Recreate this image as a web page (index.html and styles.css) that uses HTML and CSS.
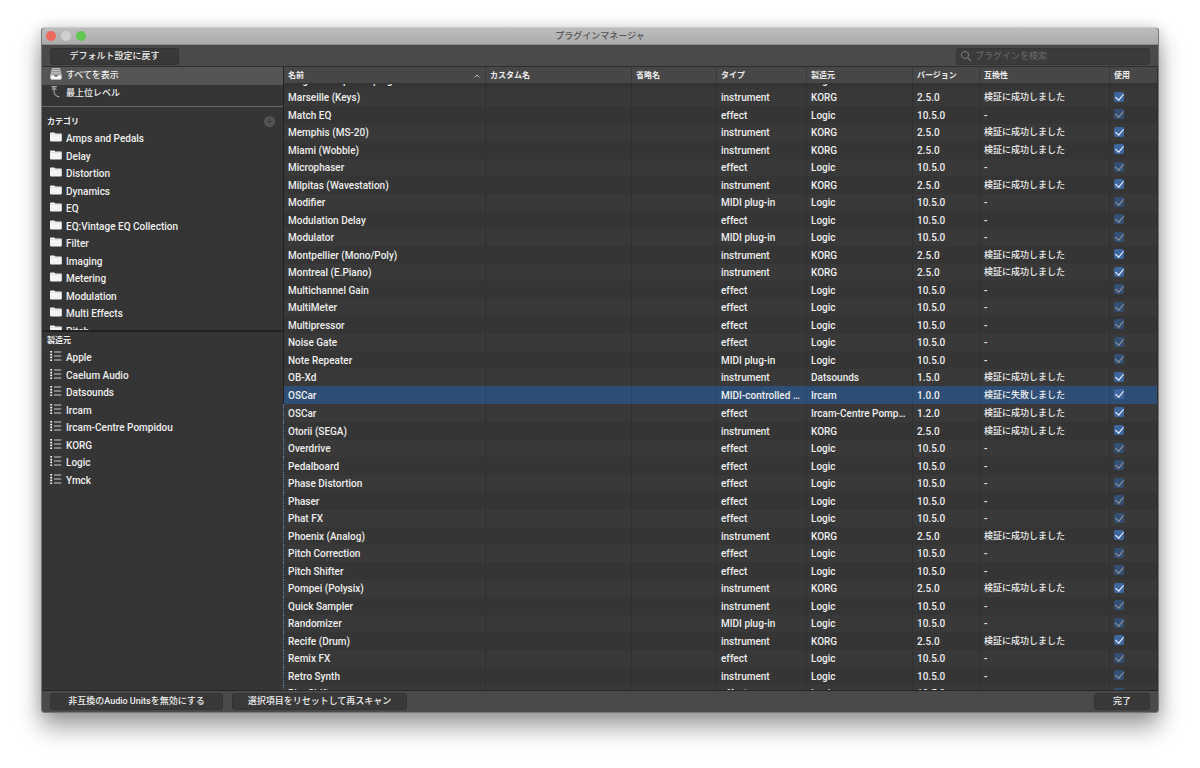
FILE: index.html
```html
<!DOCTYPE html>
<html lang="ja">
<head>
    <meta charset="UTF-8">
    <title>プラグインマネージャ</title>
    <link rel="stylesheet" href="styles.css">
</head>
<body>
<!--アイコン定義-->
<svg class="defs" aria-hidden="true">
    <symbol id="folder" viewBox="0 0 12 10">
        <path d="M0 1.2Q0 .4.8.4H4.2L5.4 1.4H11Q11.8 1.4 11.8 2.2V8.6Q11.8 9.4 11 9.4H.8Q0 9.4 0 8.6Z" fill="#f4f4f4"/>
        <path d="M0 2.6H11.8" stroke="#c5c5c5" stroke-width=".4"/>
    </symbol>
    <symbol id="list" viewBox="0 0 12 10">
        <path d="M.3 0h1.8v1.6H.3zM.3 2.8h1.8v1.6H.3zM.3 5.6h1.8v1.6H.3zM.3 8.4h1.8V10H.3z" fill="#fff"/>
        <path d="M4 1h7.2M4 5h7.2M4 9h7.2" stroke="#ccc"/>
    </symbol>
</svg>

<div class="window">
    <header class="titlebar">
        <div class="lights">
            <button class="light red" aria-label="閉じる"></button>
            <button class="light gray" aria-label="しまう"></button>
            <button class="light green" aria-label="拡大"></button>
        </div>
        <h1>プラグインマネージャ</h1>
    </header>

    <div class="toolbar">
        <button class="btn btn-default">デフォルト設定に戻す</button>
        <label class="search">
            <svg width="12" height="12" viewBox="0 0 12 12" aria-hidden="true">
                <circle cx="5" cy="5" r="3.6" fill="none" stroke="#7c7c7c"/>
                <path d="M7.6 7.6L11 11" stroke="#7c7c7c" stroke-width="1.2"/>
            </svg>
            <input type="search" placeholder="プラグインを検索" aria-label="プラグインを検索">
        </label>
    </div>

    <div class="main">
        <nav class="sidebar">
            <ul class="list top">
                <li class="active"><svg class="icon" viewBox="0 0 12 12"><path d="M2.4.6H9.6L11.2 7V10.4Q11.2 11.2 10.4 11.2H1.6Q.8 11.2.8 10.4V7Z" fill="#777" stroke="#ddd" stroke-width=".8"/><path d="M2.6 2.4H9.4M2.2 4.2H9.8M1.8 6H10.2" stroke="#eee" stroke-width=".8"/><path d="M.8 7.2H4Q4.4 9 6 9T8 7.2H11.2V11.2H.8Z" fill="#f4f4f4"/></svg><span class="jp">すべてを表示</span></li>
                <li><svg class="icon" viewBox="0 0 12 12"><path d="M1.2.7H7M4.1 1.2V5.6Q4.3 10.2 9.4 10.8M1.8 4L4.1 1.5L6.4 4" fill="none" stroke="#ccc" stroke-width=".9"/></svg><span class="jp">最上位レベル</span></li>
            </ul>
            <section class="group categories">
                <h2>カテゴリ
                    <button class="add" aria-label="カテゴリを追加"><svg width="11" height="11" viewBox="0 0 11 11"><circle cx="5.5" cy="5.5" r="5.5" fill="#545454"/><path d="M5.5 2.5V8.5M2.5 5.5H8.5" stroke="#3a3a3a"/></svg></button>
                </h2>
                <ul class="list" id="categories"></ul>
            </section>
            <section class="group makers">
                <h2>製造元</h2>
                <ul class="list" id="makers"></ul>
            </section>
        </nav>

        <div class="plugins" id="plugins">
            <table>
                <colgroup>
                    <col><col class="c-custom"><col class="c-short"><col class="c-type"><col class="c-maker"><col class="c-version"><col class="c-compat"><col class="c-use">
                </colgroup>
                <thead>
                <tr>
                    <th><div class="sort">名前<svg width="6" height="4" viewBox="0 0 6 4"><path d="M.6 3.4L3 1L5.4 3.4" fill="none" stroke="#ccc" stroke-width=".9"/></svg></div></th>
                    <th>カスタム名</th>
                    <th>省略名</th>
                    <th>タイプ</th>
                    <th>製造元</th>
                    <th>バージョン</th>
                    <th>互換性</th>
                    <th>使用</th>
                </tr>
                </thead>
                <tbody id="rows"></tbody>
            </table>
        </div>
    </div>

    <footer class="bottombar">
        <button class="btn btn-disable">非互換のAudio Unitsを無効にする</button>
        <button class="btn btn-rescan">選択項目をリセットして再スキャン</button>
        <button class="btn btn-done">完了</button>
    </footer>
</div>

<script src="script.js"></script>
</body>
</html>
```
FILE: styles.css
```css
* {
    box-sizing: border-box;
}

body {
    margin: 0;
    height: 100vh;
    padding: 27px 41px 55px;
    background: #fff;
    color: #eee;
    font-family: Roboto, "Noto Sans CJK JP", sans-serif;
    font-size: 10px;
    font-weight: 500;
    line-height: 17px;
}

h1, h2, ul {
    margin: 0;
    padding: 0;
    list-style: none;
}

button, input {
    font-family: inherit;
    color: inherit;
}

.defs {
    display: none;
}

.window {
    display: flex;
    flex-direction: column;
    height: 100%;
    background: #4a4a4a;
    border-radius: 4px;
    overflow: hidden;
    border: 1px solid #777;
    border-top-color: #ccc;
    box-shadow: 0 14px 24px rgba(0, 0, 0, .38), 0 0 14px rgba(0, 0, 0, .14);
}

/* タイトルバー */
.titlebar {
    display: grid;
    grid-template-columns: 1fr auto 1fr;
    align-items: center;
    flex: none;
    height: 17px;
    padding: 0 4px;
    background: linear-gradient(#bdbdbd, #acacac);
    border-bottom: 1px solid #8a8a8a;
}

.titlebar h1 {
    color: #555;
    font-size: 9px;
    font-weight: 500;
    line-height: 16px;
}

.lights {
    display: flex;
    gap: 5px;
}

.light {
    width: 10px;
    height: 10px;
    padding: 0;
    border: 0;
    border-radius: 50%;
}

.red {
    background: #ee6a5f;
}

.gray {
    background: #d0d0d0;
}

.green {
    background: #62c655;
}

/* ツールバー */
.toolbar, .bottombar {
    display: flex;
    align-items: center;
    flex: none;
    gap: 9px;
    padding: 0 8px;
    background: #4a4a4a;
}

.toolbar {
    justify-content: space-between;
    height: 21px;
    padding-top: 1px;
}

.bottombar {
    height: 22px;
    padding-bottom: 1px;
    border-top: 1px solid #262626;
}

.btn {
    height: 17px;
    padding: 0;
    background: #393939;
    border: 1px solid #333;
    border-radius: 3px;
    font-size: 9px;
    font-weight: 500;
    line-height: 15px;
}

.btn-default {
    width: 129px;
}

.btn-disable {
    width: 173px;
}

.btn-rescan {
    width: 175px;
}

.btn-done {
    width: 56px;
    margin-left: auto;
}

.search {
    display: flex;
    align-items: center;
    gap: 3px;
    width: 194px;
    height: 17px;
    padding: 0 3px;
    background: #3b3b3b;
    border: 1px solid #363636;
    border-radius: 3px;
}

.search input {
    flex: 1;
    min-width: 0;
    padding: 0;
    background: none;
    border: 0;
    outline: 0;
    font-size: 9px;
    line-height: 15px;
}

.search input::placeholder {
    color: #6c6c6c;
}

/* 本体 */
.main {
    display: flex;
    flex: 1;
    min-height: 0;
    padding-right: 1px;
    background: #2e2e2e;
    border-top: 1px solid #2e2e2e;
}

.sidebar {
    display: flex;
    flex-direction: column;
    flex: none;
    width: 241px;
    background: #353535;
}

.top {
    flex: none;
    height: 40px;
    border-bottom: 1px solid #666;
}

.list li {
    display: flex;
    gap: 4px;
    height: 17px;
    padding-left: 8px;
    white-space: nowrap;
}

/* 行の高さは 17px と 18px を交互にする */
.list li:nth-child(odd) {
    height: 18px;
}

.top .active {
    height: 17px;
    background: #555;
}

.icon {
    flex: none;
    width: 12px;
    height: 12px;
    margin-top: 1px;
}

.group .icon {
    height: 10px;
    margin-top: 2px;
}

.jp {
    font-size: 9px;
}

.group {
    overflow: hidden;
}

.group h2 {
    display: flex;
    justify-content: space-between;
    align-items: center;
    height: 17px;
    padding: 0 8px 0 5px;
    font-size: 8px;
    font-weight: 700;
}

.categories {
    flex: none;
    height: 225px;
    padding-top: 6px;
    border-bottom: 2px solid #222;
}

.makers {
    flex: 1;
}

.add {
    display: flex;
    padding: 0;
    background: none;
    border: 0;
}

/* プラグイン一覧 */
.plugins {
    flex: 1;
    min-width: 0;
    background: #353535;
    overflow: auto;
    scrollbar-width: none;
}

.plugins table {
    width: 100%;
    table-layout: fixed;
    border-collapse: separate;
    border-spacing: 0;
}

.c-custom {
    width: 146px;
}

.c-short {
    width: 85px;
}

.c-type {
    width: 90px;
}

.c-maker {
    width: 106px;
}

.c-version {
    width: 67px;
}

.c-compat {
    width: 130px;
}

.c-use {
    width: 47px;
}

.plugins th {
    position: sticky;
    top: 0;
    z-index: 1;
    height: 17px;
    padding: 1px 5px 0 4px;
    background: #474747;
    border-right: 1px solid #3a3a3a;
    border-bottom: 1px solid #333;
    font-size: 8px;
    font-weight: 700;
    line-height: 15px;
    text-align: left;
    white-space: nowrap;
}

.sort {
    display: flex;
    justify-content: space-between;
    align-items: center;
}

.plugins td {
    height: 17px;
    padding: 0 4px;
    border-right: 1px solid #303030;
    line-height: 17px;
    white-space: nowrap;
    overflow: hidden;
    text-overflow: ellipsis;
}

.plugins tr:nth-child(odd) td, .plugins tr:nth-child(20n) td {
    height: 18px;
}

.plugins tr:nth-child(even) td {
    background: #393939;
}

.plugins tr.selected td {
    background: #2f4e75;
    border-right-color: #2a476b;
}

.plugins td.compat {
    font-size: 9px;
}

.plugins th:first-child, .plugins td:first-child {
    border-left: 1px solid #222;
}

.plugins tr.selected ~ tr td:first-child {
    border-left: 1px dotted #5c80a8;
}

.plugins th:last-child, .plugins td:last-child {
    border-right: 0;
}

.check {
    display: block;
    appearance: none;
    width: 10px;
    height: 10px;
    margin: 0 0 2px;
    border-radius: 2px;
    background: #3f679f;
}

.check::after {
    content: "";
    display: block;
    width: 4px;
    height: 7px;
    margin-left: 3px;
    border: solid #fff;
    border-width: 0 1px 1px 0;
    transform: rotate(40deg);
}

.check:disabled {
    background: #344f74;
}

.check:disabled::after {
    border-color: #999;
}
```
FILE: script.js
```js
var categories = ["Amps and Pedals", "Delay", "Distortion", "Dynamics", "EQ", "EQ:Vintage EQ Collection",
    "Filter", "Imaging", "Metering", "Modulation", "Multi Effects", "Pitch"];
var makers = ["Apple", "Caelum Audio", "Datsounds", "Ircam", "Ircam-Centre Pompidou", "KORG", "Logic", "Ymck"];

var OK = "検証に成功しました";
var NG = "検証に失敗しました";

/*名前, タイプ, 製造元, バージョン, 互換性*/
var plugins = [
    ["Magnetic Tape Looping", "effect", "Logic", "10.5.0", "-"],
    ["Marseille (Keys)", "instrument", "KORG", "2.5.0", OK],
    ["Match EQ", "effect", "Logic", "10.5.0", "-"],
    ["Memphis (MS-20)", "instrument", "KORG", "2.5.0", OK],
    ["Miami (Wobble)", "instrument", "KORG", "2.5.0", OK],
    ["Microphaser", "effect", "Logic", "10.5.0", "-"],
    ["Milpitas (Wavestation)", "instrument", "KORG", "2.5.0", OK],
    ["Modifier", "MIDI plug-in", "Logic", "10.5.0", "-"],
    ["Modulation Delay", "effect", "Logic", "10.5.0", "-"],
    ["Modulator", "MIDI plug-in", "Logic", "10.5.0", "-"],
    ["Montpellier (Mono/Poly)", "instrument", "KORG", "2.5.0", OK],
    ["Montreal (E.Piano)", "instrument", "KORG", "2.5.0", OK],
    ["Multichannel Gain", "effect", "Logic", "10.5.0", "-"],
    ["MultiMeter", "effect", "Logic", "10.5.0", "-"],
    ["Multipressor", "effect", "Logic", "10.5.0", "-"],
    ["Noise Gate", "effect", "Logic", "10.5.0", "-"],
    ["Note Repeater", "MIDI plug-in", "Logic", "10.5.0", "-"],
    ["OB-Xd", "instrument", "Datsounds", "1.5.0", OK],
    ["OSCar", "MIDI-controlled effect", "Ircam", "1.0.0", NG],
    ["OSCar", "effect", "Ircam-Centre Pompidou", "1.2.0", OK],
    ["Otorii (SEGA)", "instrument", "KORG", "2.5.0", OK],
    ["Overdrive", "effect", "Logic", "10.5.0", "-"],
    ["Pedalboard", "effect", "Logic", "10.5.0", "-"],
    ["Phase Distortion", "effect", "Logic", "10.5.0", "-"],
    ["Phaser", "effect", "Logic", "10.5.0", "-"],
    ["Phat FX", "effect", "Logic", "10.5.0", "-"],
    ["Phoenix (Analog)", "instrument", "KORG", "2.5.0", OK],
    ["Pitch Correction", "effect", "Logic", "10.5.0", "-"],
    ["Pitch Shifter", "effect", "Logic", "10.5.0", "-"],
    ["Pompei (Polysix)", "instrument", "KORG", "2.5.0", OK],
    ["Quick Sampler", "instrument", "Logic", "10.5.0", "-"],
    ["Randomizer", "MIDI plug-in", "Logic", "10.5.0", "-"],
    ["Recife (Drum)", "instrument", "KORG", "2.5.0", OK],
    ["Remix FX", "effect", "Logic", "10.5.0", "-"],
    ["Retro Synth", "instrument", "Logic", "10.5.0", "-"],
    ["RingShifter", "effect", "Logic", "10.5.0", "-"]
];

function fillList(id, names, icon) {
    document.getElementById(id).innerHTML = names.map(function (name) {
        return '<li><svg class="icon"><use href="#' + icon + '"/></svg><span>' + name + '</span></li>';
    }).join("");
}

fillList("categories", categories, "folder");
fillList("makers", makers, "list");

document.getElementById("rows").innerHTML = plugins.map(function (p) {
    /*Logic付属のプラグインは無効にできない*/
    var disabled = p[2] == "Logic" ? " disabled" : "";
    return '<tr' + (p[4] == NG ? ' class="selected"' : '') + '>' +
        '<td>' + p[0] + '</td><td></td><td></td>' +
        '<td>' + p[1] + '</td><td>' + p[2] + '</td><td>' + p[3] + '</td>' +
        '<td class="' + (p[4] == "-" ? '' : 'compat') + '">' + p[4] + '</td>' +
        '<td><input type="checkbox" class="check" aria-label="' + p[0] + 'を使用" checked' + disabled + '></td></tr>';
}).join("");

/*一覧を少しスクロールした位置から表示*/
document.getElementById("plugins").scrollTop = 13;
```
